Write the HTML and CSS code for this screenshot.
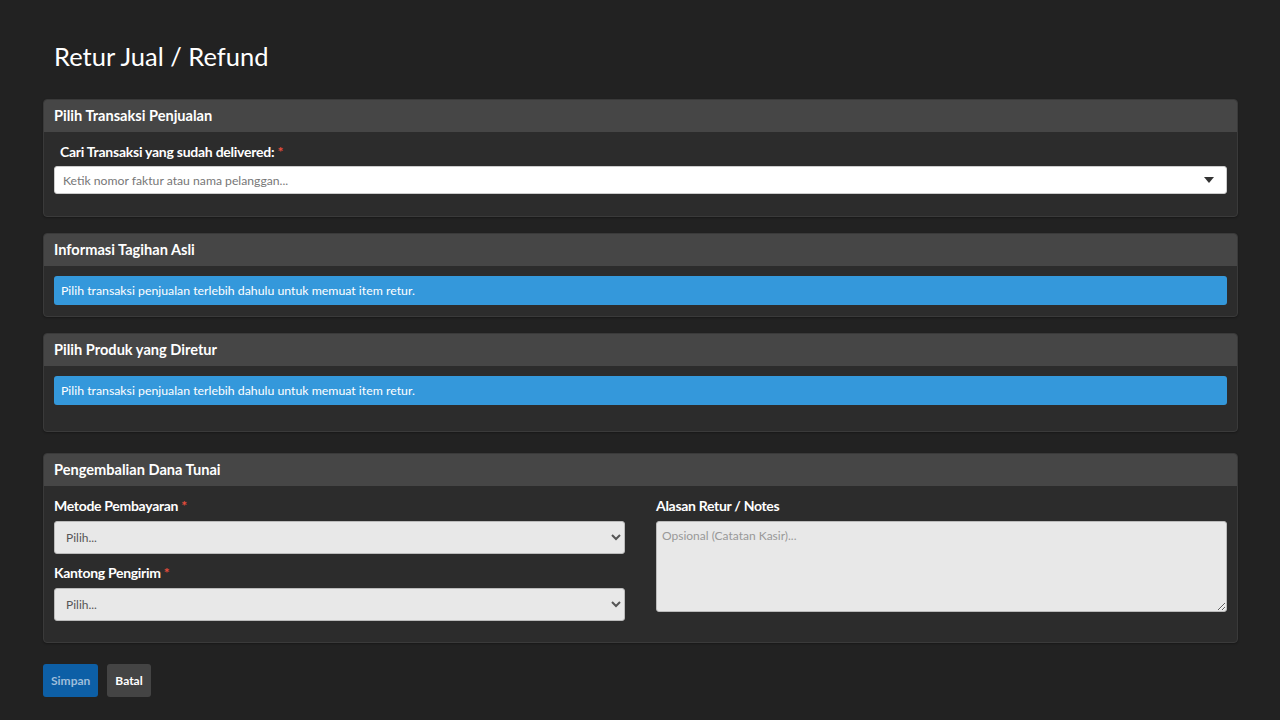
FILE: index.html
```html
<!DOCTYPE html>
<html lang="id">
<head>
    <meta charset="UTF-8">
    <meta name="viewport" content="width=device-width, initial-scale=1.0">
    <title>Retur Jual / Refund</title>
    <link rel="stylesheet" href="styles.css">
</head>
<body>
    <div class="page">
        <h1 class="page-title">Retur Jual / Refund</h1>

        <div class="panel panel-search">
            <div class="panel-heading">Pilih Transaksi Penjualan</div>
            <div class="panel-body">
                <label class="search-label">Cari Transaksi yang sudah delivered: <span class="req">*</span></label>
                <div class="search-box">
                    <input type="text" placeholder="Ketik nomor faktur atau nama pelanggan...">
                    <svg class="caret" width="10" height="6" viewBox="0 0 10 6"><path d="M0 0h10L5 6z" fill="#333"/></svg>
                </div>
            </div>
        </div>

        <div class="panel">
            <div class="panel-heading">Informasi Tagihan Asli</div>
            <div class="panel-body">
                <div class="alert">Pilih transaksi penjualan terlebih dahulu untuk memuat item retur.</div>
            </div>
        </div>

        <div class="panel panel-items">
            <div class="panel-heading">Pilih Produk yang Diretur</div>
            <div class="panel-body">
                <div class="alert">Pilih transaksi penjualan terlebih dahulu untuk memuat item retur.</div>
            </div>
        </div>

        <div class="panel panel-refund">
            <div class="panel-heading">Pengembalian Dana Tunai</div>
            <div class="panel-body refund-grid">
                <div class="col">
                    <div class="form-group">
                        <label>Metode Pembayaran <span class="req">*</span></label>
                        <select><option>Pilih...</option></select>
                    </div>
                    <div class="form-group">
                        <label>Kantong Pengirim <span class="req">*</span></label>
                        <select><option>Pilih...</option></select>
                    </div>
                </div>
                <div class="col">
                    <div class="form-group">
                        <label>Alasan Retur / Notes</label>
                        <textarea placeholder="Opsional (Catatan Kasir)..."></textarea>
                    </div>
                </div>
            </div>
        </div>

        <div class="actions">
            <button class="btn btn-primary">Simpan</button>
            <button class="btn btn-default">Batal</button>
        </div>
    </div>
</body>
</html>
```

FILE: styles.css
```css
body {
    margin: 0;
    background-color: #222222;
    color: #fff;
    font-family: Lato, "Open Sans", sans-serif;
}
.page {
    padding: 38px 42px 20px 43px;
}
.page-title {
    font-size: 25.5px;
    font-weight: 400;
    margin: 0 0 25px 11px;
    line-height: 36px;
}
.panel {
    background-color: #2c2c2c;
    border: 1px solid #3a3a3a;
    border-radius: 4px;
    margin-bottom: 16px;
    box-shadow: 0 1px 2px rgba(0, 0, 0, 0.3);
    overflow: hidden;
}
.panel-heading {
    background-color: #464646;
    height: 32px;
    line-height: 31px;
    padding: 0 10px;
    font-size: 14.6px;
    font-weight: 700;
}
.panel-body {
    padding: 10px 10px 11px;
}
.req {
    color: #e74c3c;
}
.panel-search .panel-body {
    padding-bottom: 22px;
}
.search-label {
    display: block;
    font-size: 14px;
    font-weight: 700;
    line-height: 20px;
    padding-left: 6px;
    margin-bottom: 4px;
    letter-spacing: -0.25px;
}
.search-box {
    display: flex;
    align-items: center;
    background-color: #fff;
    border: 1px solid #ccc;
    border-radius: 3px;
    height: 26px;
    padding: 0 12px 0 8px;
}
.search-box input {
    flex: 1;
    border: none;
    outline: none;
    font-family: inherit;
    font-size: 12.2px;
    padding: 0;
    background: transparent;
}
.search-box input::placeholder {
    color: #777;
}
.alert {
    background-color: #3498db;
    border-radius: 3px;
    padding: 0 7px;
    height: 29px;
    line-height: 29px;
    font-size: 12.3px;
}
.panel-items .panel-body {
    padding-bottom: 26px;
}
.panel-refund {
    margin-top: 21px;
}
.refund-grid {
    display: grid;
    grid-template-columns: 1fr 1fr;
    column-gap: 31px;
    padding-bottom: 21px;
}
.form-group {
    display: flex;
    flex-direction: column;
    margin-bottom: 9px;
}
.form-group:last-child {
    margin-bottom: 0;
}
.form-group label {
    font-size: 14px;
    font-weight: 700;
    line-height: 20px;
    margin: 0 0 5px;
    letter-spacing: -0.3px;
}
.form-group select,
.form-group textarea {
    background-color: #e8e8e8;
    border: 1px solid #bbb;
    border-radius: 3px;
    font-family: inherit;
    font-size: 12px;
    color: #555;
}
.form-group select {
    height: 33px;
    padding: 0 7px;
}
.form-group textarea {
    height: 91px;
    box-sizing: border-box;
    padding: 6px 5px;
    resize: vertical;
}
.form-group textarea::placeholder {
    color: #999;
}
.actions {
    display: flex;
    gap: 9px;
    margin-top: 21px;
}
.btn {
    height: 33px;
    border: none;
    border-radius: 3px;
    font-family: inherit;
    font-size: 12px;
    font-weight: 700;
    padding: 0 8px;
    cursor: pointer;
}
.btn-primary {
    background-color: #0d5fa6;
    color: #9fbedb;
}
.btn-default {
    background-color: #444;
    color: #fff;
}
```
